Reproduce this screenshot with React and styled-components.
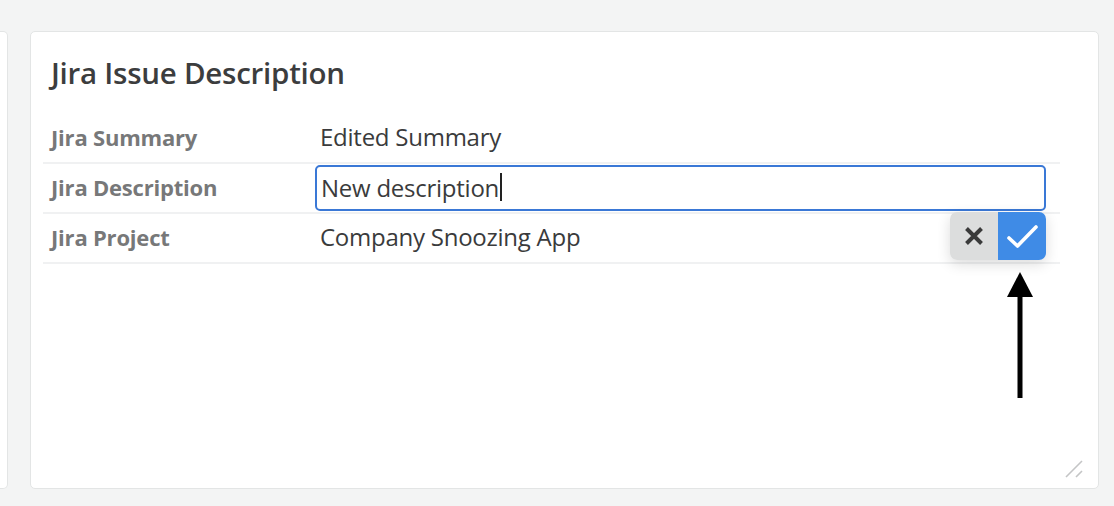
import React from "react";
import styled, { createGlobalStyle } from "styled-components";

const GlobalStyle = createGlobalStyle`
  html, body {
    margin: 0;
    padding: 0;
    background: #f3f4f4;
  }
  body {
    font-family: "Open Sans", "Noto Sans", sans-serif;
  }
`;

const Page = styled.div`
  display: flex;
  gap: 22px;
  height: 506px;
  padding: 31px 15px 17px 0;
  box-sizing: border-box;
`;

const SideCard = styled.div`
  width: 7px;
  background: #fff;
  border: 1px solid #e3e5e5;
  border-left: none;
  border-radius: 0 5px 5px 0;
`;

const Card = styled.section`
  position: relative;
  flex: 1;
  background: #fff;
  border: 1px solid #e3e5e5;
  border-radius: 5px;
  padding: 21px 38px 0 12px;
`;

const Title = styled.h2`
  margin: 0 0 21px 8px;
  font-size: 29.5px;
  font-weight: 600;
  color: #3c3d3e;
  line-height: 40px;
  letter-spacing: -0.25px;
`;

const Table = styled.div`
  display: flex;
  flex-direction: column;
`;

const Row = styled.div`
  display: grid;
  grid-template-columns: 272px 1fr;
  height: 50px;
  align-items: center;
  border-bottom: 2px solid #f0f1f2;
  box-sizing: border-box;
`;

const Label = styled.div`
  padding: 0 0 3px 8px;
  font-size: 22px;
  font-weight: 700;
  color: #777879;
  letter-spacing: -0.2px;
`;

const Value = styled.div`
  position: relative;
  padding: 0 15px 3px 5px;
  font-size: 24px;
  color: #3a3b3c;
  letter-spacing: -0.25px;
`;

const EditCell = styled.div`
  position: relative;
  padding-right: 14px;
`;

const Input = styled.div`
  height: 46px;
  box-sizing: border-box;
  border: 2px solid #3a78d6;
  border-radius: 5px;
  padding: 0 4px 2px;
  display: flex;
  align-items: center;
  font-size: 24px;
  color: #3a3b3c;
  letter-spacing: -0.25px;
`;

const Caret = styled.span`
  display: inline-block;
  width: 2px;
  height: 28px;
  background: #222;
  margin-left: 1px;
`;

const Actions = styled.div`
  position: absolute;
  top: 47px;
  right: 14px;
  display: flex;
  border-radius: 7px;
  overflow: hidden;
  box-shadow: 0 4px 14px rgba(0, 0, 0, 0.14);
  z-index: 2;
`;

const ActionButton = styled.button`
  width: 48px;
  height: 48px;
  border: none;
  padding: 0;
  display: flex;
  align-items: center;
  justify-content: center;
  background: ${(p) => (p.$primary ? "#3f8be6" : "#dcdddd")};
`;

const Arrow = styled.svg`
  position: absolute;
  left: 976px;
  top: 240px;
`;

const Resize = styled.svg`
  position: absolute;
  right: 15px;
  bottom: 10px;
`;

const rows = [
  { label: "Jira Summary", value: "Edited Summary" },
  { label: "Jira Description", editing: "New description" },
  { label: "Jira Project", value: "Company Snoozing App" },
];

export default function App() {
  return (
    <>
      <GlobalStyle />
      <Page>
        <SideCard />
        <Card>
          <Title>Jira Issue Description</Title>
          <Table>
            {rows.map((r) =>
              r.editing ? (
                <Row key={r.label}>
                  <Label>{r.label}</Label>
                  <EditCell>
                    <Input>
                      {r.editing}
                      <Caret />
                    </Input>
                    <Actions>
                      <ActionButton>
                        <svg width="20" height="20" viewBox="0 0 20 20">
                          <path d="M2.5 2.5 L17.5 17.5 M17.5 2.5 L2.5 17.5" stroke="#3a3a3a" strokeWidth="4" />
                        </svg>
                      </ActionButton>
                      <ActionButton $primary>
                        <svg width="32" height="24" viewBox="0 0 32 24">
                          <path
                            d="M3 14 L11.5 22 L30 3"
                            fill="none"
                            stroke="#fff"
                            strokeWidth="3.6"
                            strokeLinecap="round"
                            strokeLinejoin="round"
                          />
                        </svg>
                      </ActionButton>
                    </Actions>
                  </EditCell>
                </Row>
              ) : (
                <Row key={r.label}>
                  <Label>{r.label}</Label>
                  <Value>{r.value}</Value>
                </Row>
              )
            )}
          </Table>
          <Arrow width="26" height="126" viewBox="0 0 26 126">
            <polygon points="13,0 0,25 26,25" fill="#000" />
            <rect x="10.5" y="22" width="5" height="104" fill="#000" />
          </Arrow>
          <Resize width="18" height="18" viewBox="0 0 18 18">
            <path d="M1 17 L17 1 M11 17 L17 11" stroke="#c4c5c6" strokeWidth="1.6" />
          </Resize>
        </Card>
      </Page>
    </>
  );
}
